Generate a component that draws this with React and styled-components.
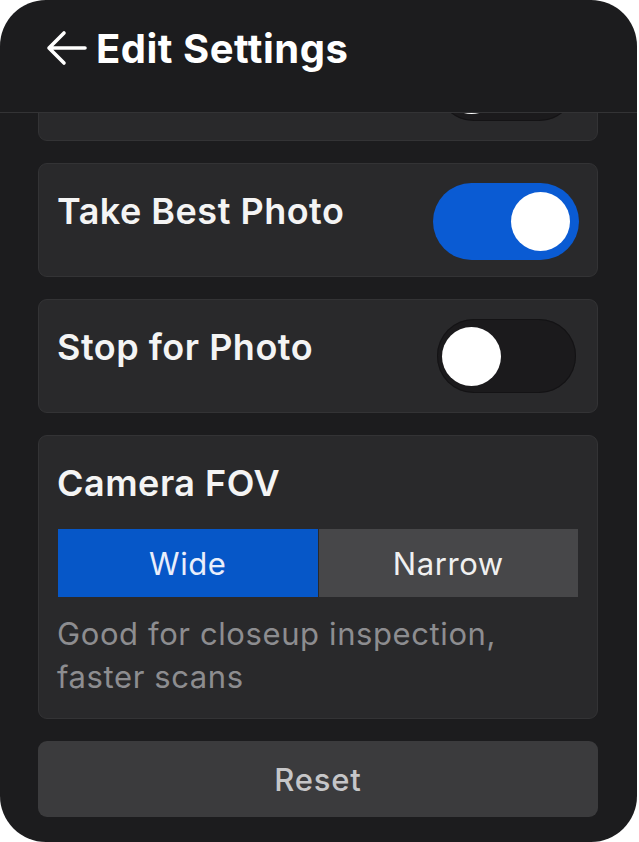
import { useState } from 'react'
import styled, { createGlobalStyle } from 'styled-components'

const GlobalStyle = createGlobalStyle`
  html, body {
    margin: 0;
    padding: 0;
    background: #ffffff;
  }
  body {
    font-family: Inter, 'Liberation Sans', Arial, sans-serif;
    -webkit-font-smoothing: antialiased;
  }
`

const Screen = styled.div`
  width: 637px;
  height: 842px;
  background: #1c1c1e;
  border-radius: 46px;
  overflow: hidden;
  display: flex;
  flex-direction: column;
`

const Header = styled.header`
  flex: none;
  height: 113px;
  box-sizing: border-box;
  display: flex;
  align-items: flex-start;
  gap: 8px;
  padding: 25px 0 0 46px;
  border-bottom: 1px solid #333335;
`

const BackButton = styled.button`
  width: 42px;
  height: 42px;
  margin-top: 4px;
  padding: 0;
  border: 0;
  background: none;
  color: #ffffff;
  cursor: pointer;
`

const Title = styled.h1`
  margin: 0;
  font-size: 40px;
  line-height: 48px;
  font-weight: 700;
  letter-spacing: 0.5px;
  color: #ffffff;
`

const Scroll = styled.main`
  flex: 1;
  overflow: hidden;
  padding: 0 39px 0 38px;
`

// list is scrolled down a little, so the first card sits mostly under the header
const List = styled.div`
  display: flex;
  flex-direction: column;
  gap: 22px;
  margin-top: -86px;
`

const Card = styled.section`
  box-sizing: border-box;
  background: #29292b;
  border: 1px solid #333335;
  border-radius: 9px;
  padding: 19px 18px 20px 18px;
`

const ToggleRow = styled(Card)`
  height: 114px;
  padding-bottom: 0;
  display: flex;
  justify-content: space-between;
  align-items: flex-start;
`

const Label = styled.h2`
  margin: 7px 0 0;
  font-size: 36px;
  line-height: 43px;
  font-weight: 600;
  letter-spacing: 0.5px;
  color: #f4f4f4;
`

const Track = styled.button`
  flex: none;
  box-sizing: border-box;
  display: flex;
  align-items: center;
  justify-content: ${(p) => (p.$on ? 'flex-end' : 'flex-start')};
  width: ${(p) => (p.$on ? 146 : 139)}px;
  height: ${(p) => (p.$on ? 77 : 74)}px;
  margin-left: auto;
  margin-right: ${(p) => (p.$on ? 0 : 3)}px;
  padding: 0 ${(p) => (p.$on ? 9 : 5)}px;
  border: 0;
  border-radius: 40px;
  background: ${(p) => (p.$on ? '#0a5bd3' : '#1b1a1c')};
  box-shadow: ${(p) => (p.$on ? 'none' : 'inset 0 0 0 1px #141315')};
  cursor: pointer;
`

const Knob = styled.span`
  width: 59px;
  height: 59px;
  border-radius: 50%;
  background: #ffffff;
`

const Segmented = styled.div`
  display: grid;
  grid-template-columns: 1fr 1fr;
  gap: 1px;
  height: 68px;
  margin: 24px 1px 0 1px;
  background: #29292b;
`

const Segment = styled.button`
  border: 0;
  padding: 0;
  font-family: inherit;
  font-size: 31px;
  font-weight: 400;
  letter-spacing: 0.6px;
  color: ${(p) => (p.$active ? '#e9eefb' : '#f0f0f0')};
  background: ${(p) => (p.$active ? '#0657c8' : '#474749')};
  cursor: pointer;
`

const Hint = styled.p`
  margin: 15px 0 0;
  font-size: 31px;
  line-height: 43px;
  letter-spacing: 0.6px;
  color: #8d8d90;
`

const ResetButton = styled.button`
  height: 76px;
  border: 0;
  border-radius: 9px;
  background: #3b3b3d;
  font-family: inherit;
  font-size: 31px;
  font-weight: 500;
  letter-spacing: 0.8px;
  color: #c6c6c8;
  cursor: pointer;
`

function Toggle({ on, onChange }) {
  return (
    <Track $on={on} onClick={() => onChange(!on)} aria-pressed={on}>
      <Knob />
    </Track>
  )
}

function ToggleCard({ label, on, onChange }) {
  return (
    <ToggleRow>
      {label && <Label>{label}</Label>}
      <Toggle on={on} onChange={onChange} />
    </ToggleRow>
  )
}

function App() {
  const [settings, setSettings] = useState({
    autoCapture: false,
    bestPhoto: true,
    stopForPhoto: false,
  })
  const [fov, setFov] = useState('wide')

  const set = (key) => (value) => setSettings({ ...settings, [key]: value })

  return (
    <>
      <GlobalStyle />
      <Screen>
        <Header>
          <BackButton aria-label="Back">
            <svg width="42" height="42" viewBox="0 0 42 42" fill="none">
              <path
                d="M3 19 H39 M3 19 L18 4 M3 19 L18 34"
                stroke="currentColor"
                strokeWidth="3.6"
                strokeLinecap="round"
                strokeLinejoin="round"
              />
            </svg>
          </BackButton>
          <Title>Edit Settings</Title>
        </Header>
        <Scroll>
          <List>
            {/* scrolled out of view above, only its bottom edge shows */}
            <ToggleCard on={settings.autoCapture} onChange={set('autoCapture')} />
            <ToggleCard label="Take Best Photo" on={settings.bestPhoto} onChange={set('bestPhoto')} />
            <ToggleCard label="Stop for Photo" on={settings.stopForPhoto} onChange={set('stopForPhoto')} />
            <Card>
              <Label>Camera FOV</Label>
              <Segmented>
                <Segment $active={fov === 'wide'} onClick={() => setFov('wide')}>
                  Wide
                </Segment>
                <Segment $active={fov === 'narrow'} onClick={() => setFov('narrow')}>
                  Narrow
                </Segment>
              </Segmented>
              <Hint>
                {fov === 'wide'
                  ? 'Good for closeup inspection, faster scans'
                  : 'Good for distant inspection, slower scans'}
              </Hint>
            </Card>
            <ResetButton
              onClick={() => {
                setSettings({ autoCapture: false, bestPhoto: true, stopForPhoto: false })
                setFov('wide')
              }}
            >
              Reset
            </ResetButton>
          </List>
        </Scroll>
      </Screen>
    </>
  )
}

export default App
